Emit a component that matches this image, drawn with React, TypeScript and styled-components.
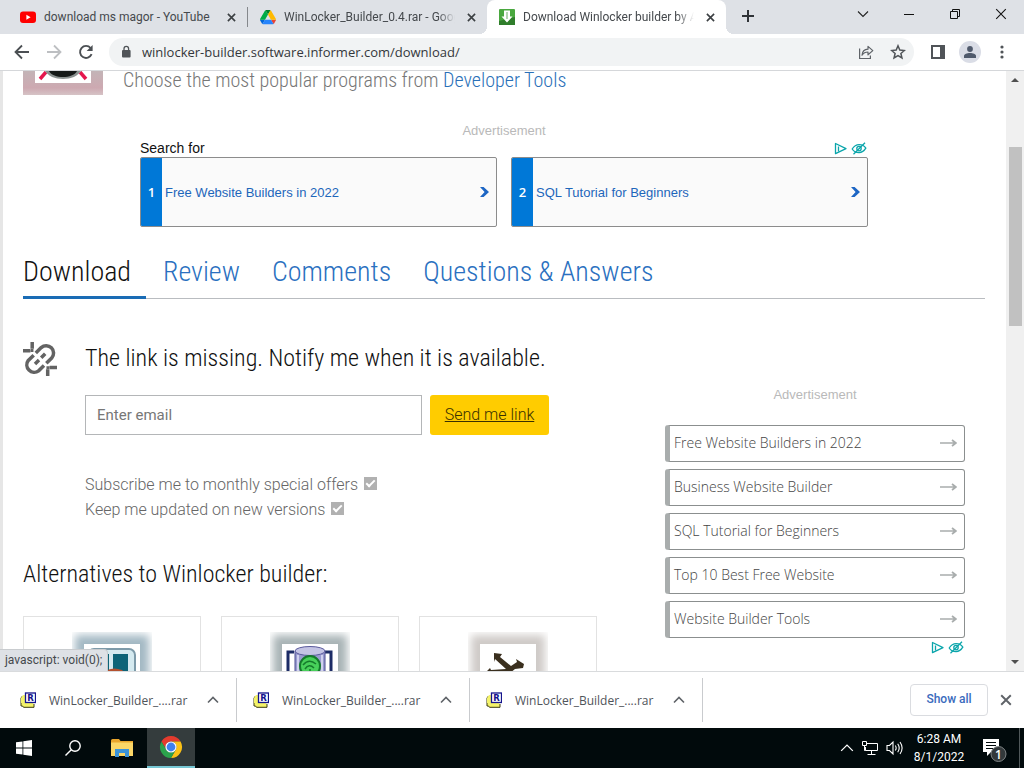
import React from "react";
import styled, { createGlobalStyle } from "styled-components";

const ui = `"Open Sans", "Noto Sans", sans-serif`;
const condensed = `"Roboto Condensed", Roboto, sans-serif`;
const arial = `"Liberation Sans", Arial, sans-serif`;

const GlobalStyle = createGlobalStyle`
  *, *::before, *::after { box-sizing: border-box; }
  body { margin: 0; background: #fff; font-family: ${ui}; overflow: hidden; }
  button { font: inherit; color: inherit; background: none; border: 0; padding: 0; }
  svg { display: block; flex: none; }
  h2, h3, p, ul { margin: 0; padding: 0; font-weight: inherit; }
  ul { list-style: none; }
`;

const Desktop = styled.div`
  display: flex;
  flex-direction: column;
  height: 100vh;
`;

/* ---------- Browser frame ---------- */

const TabStrip = styled.header`
  display: flex;
  flex: none;
  height: 34px;
  padding-left: 8px;
  background: #dee1e6;
`;

const Tab = styled.div<{ $active?: boolean }>`
  position: relative;
  display: flex;
  align-items: center;
  gap: 8px;
  flex: 0 1 239px;
  min-width: 0;
  padding: 0 8px 0 12px;
  background: ${(p) => (p.$active ? "#fff" : "transparent")};
  border-radius: 8px 8px 0 0;
  font: 12px/16px Roboto, sans-serif;
  color: #45494d;

  &::before,
  &::after {
    content: "";
    display: ${(p) => (p.$active ? "block" : "none")};
    position: absolute;
    bottom: 0;
    width: 8px;
    height: 8px;
  }
  &::before {
    left: -8px;
    background: radial-gradient(circle at 0 0, transparent 8px, #fff 8px);
  }
  &::after {
    right: -8px;
    background: radial-gradient(circle at 100% 0, transparent 8px, #fff 8px);
  }
`;

const TabDivider = styled.span`
  align-self: center;
  flex: none;
  width: 1px;
  height: 20px;
  background: #85888c;
`;

const TabTitle = styled.span<{ $fade?: boolean }>`
  flex: 1;
  min-width: 0;
  overflow: hidden;
  white-space: nowrap;
  mask-image: ${(p) => (p.$fade ? "linear-gradient(to right, #000 90%, transparent)" : "none")};
`;

const IconButton = styled.button<{ $w?: number }>`
  display: flex;
  align-items: center;
  justify-content: center;
  flex: none;
  width: ${(p) => p.$w ?? 16}px;
  height: 28px;
`;

const WindowButtons = styled.div`
  display: flex;
  margin-left: auto;
`;

const Toolbar = styled.nav`
  display: flex;
  align-items: center;
  flex: none;
  height: 37px;
  padding: 0 6px;
  border-bottom: 1px solid #d5d7da;
  background: #fff;
`;

const AddressBar = styled.div`
  display: flex;
  align-items: center;
  flex: 1;
  height: 28px;
  margin: 0 8px 0 7px;
  padding-left: 11px;
  border-radius: 14px;
  background: #f1f3f4;
`;

const Address = styled.input`
  flex: 1;
  min-width: 0;
  height: 24px;
  margin-left: 10px;
  padding: 0;
  border: 0;
  outline: 0;
  background: transparent;
  font: 13px ${ui};
  color: #34373b;
`;

const Avatar = styled.span`
  display: flex;
  align-items: center;
  justify-content: center;
  width: 22px;
  height: 22px;
  border-radius: 50%;
  background: #dadde6;
`;

const Viewport = styled.div`
  position: relative;
  display: flex;
  flex: 1;
  min-height: 0;
  overflow: hidden;
`;

const ScrollTrack = styled.div`
  display: flex;
  flex-direction: column;
  justify-content: space-between;
  align-items: center;
  flex: none;
  width: 18px;
  padding: 5px 0;
  background: #f0f0f0;
`;

const ScrollThumb = styled.div`
  width: 13px;
  height: 179px;
  margin: 63px 0 auto;
  background: #c1c1c1;
`;

const StatusBubble = styled.div`
  position: absolute;
  left: 0;
  bottom: 0;
  height: 22px;
  padding: 0 5px;
  border: 1px solid #c9cccf;
  border-width: 1px 1px 0 0;
  border-radius: 0 4px 0 0;
  background: #dee1e6;
  font: 12px/20px Roboto, sans-serif;
  color: #45494d;
`;

/* ---------- Web page ---------- */

const Page = styled.main`
  flex: 1;
  min-width: 0;
  padding: 0 21px 0 20px;
  border-left: 3px solid #e6e6e6;
  overflow: hidden;
  font-family: ${condensed};
  font-weight: 300;
`;

const Intro = styled.div`
  display: flex;
  gap: 20px;
  height: 24px;
`;

const IntroText = styled.p`
  margin-top: -5px;
  font-size: 20px;
  line-height: 28px;
  color: #777;
`;

const TextLink = styled.a`
  color: #2a70b8;
  text-decoration: none;
`;

const AdLabel = styled.p`
  font: 13px/16px ${arial};
  color: #b9b9b9;
  text-align: center;
`;

const BannerAd = styled.section`
  width: 100%;
  max-width: 728px;
  margin: 28px auto 0;
`;

const BannerHead = styled.div`
  display: flex;
  align-items: center;
  justify-content: space-between;
  height: 18px;
  font: 14px/18px ${arial};
  color: #111;
`;

const AdMarks = styled.span`
  display: flex;
  justify-content: flex-end;
  gap: 3px;
  padding-right: 1px;
`;

const BannerRow = styled.div`
  display: flex;
  gap: 14px;
`;

const BannerLink = styled.a`
  display: flex;
  align-items: center;
  flex: 1;
  height: 70px;
  border: 1px solid #8c8c8c;
  border-radius: 2px;
  background: #fafafa;
  overflow: hidden;
  font: 13px ${arial};
  color: #1d66bb;
  text-decoration: none;
`;

const BannerNumber = styled.span`
  display: flex;
  align-items: center;
  justify-content: center;
  align-self: stretch;
  width: 21px;
  margin-right: 3px;
  background: #0078d7;
  font: 600 13px ${ui};
  color: #fff;
`;

const BannerText = styled.span`
  flex: 1;
`;

const PageTabs = styled.nav`
  display: flex;
  gap: 17px;
  height: 46px;
  margin-top: 26px;
  border-bottom: 1px solid #b9bcc0;
`;

const PageTab = styled.a<{ $active?: boolean }>`
  height: 46px;
  padding-right: 15px;
  border-bottom: 3px solid ${(p) => (p.$active ? "#1a6cb5" : "transparent")};
  font-size: 28px;
  line-height: 38px;
  color: ${(p) => (p.$active ? "#111" : "#2a70c0")};
  text-decoration: none;
  white-space: nowrap;
`;

const Columns = styled.div`
  display: flex;
`;

const MainColumn = styled.div`
  flex: 1;
  min-width: 0;
`;

const Notify = styled.section`
  display: grid;
  grid-template-columns: 34px 1fr;
  column-gap: 28px;
  padding-top: 43px;
`;

const Heading = styled.h2`
  font-size: 24px;
  line-height: 32px;
  color: #111;
  white-space: nowrap;
`;

const EmailForm = styled.form`
  display: flex;
  gap: 8px;
  margin-top: 21px;
`;

const EmailInput = styled.input`
  width: 337px;
  height: 40px;
  padding: 0 11px;
  border: 1px solid #b4b6b8;
  background: #fff;
  font: 15px Roboto, sans-serif;
  &::placeholder { color: #777; }
`;

const SendLink = styled.a`
  width: 119px;
  height: 40px;
  border-radius: 3px;
  background: #fc0;
  font: 300 16px/39px Roboto, sans-serif;
  text-align: center;
  color: #3a3000;
`;

const Options = styled.div`
  display: flex;
  flex-direction: column;
  align-items: flex-start;
  margin-top: 37px;
  font: 300 16px/25px Roboto, sans-serif;
  color: #666;
`;

const Option = styled.label`
  display: flex;
  align-items: center;
  gap: 6px;
`;

const Check = styled.input`
  appearance: none;
  display: flex;
  justify-content: center;
  width: 13px;
  height: 13px;
  margin: 0 0 2px;
  background: #b1b1b1;
  &:checked::after {
    content: "";
    width: 5px;
    height: 9px;
    margin-top: 1px;
    border: solid #fff;
    border-width: 0 2px 2px 0;
    transform: rotate(45deg);
  }
`;

const AltHeading = styled(Heading)`
  margin-top: 36px;
`;

const Cards = styled.div`
  display: flex;
  gap: 20px;
  margin-top: 26px;
`;

const Card = styled.a`
  display: flex;
  justify-content: center;
  flex: none;
  width: 178px;
  height: 180px;
  padding-top: 15px;
  border: 1px solid #e2e2e2;
`;

const Side = styled.aside`
  flex: none;
  width: 340px;
  padding: 88px 20px 0;
`;

const SideList = styled.ul`
  display: flex;
  flex-direction: column;
  gap: 7px;
  margin: 22px 0 3px;
`;

const SideLink = styled.a`
  display: flex;
  align-items: center;
  justify-content: space-between;
  height: 37px;
  padding: 0 7px 2px 4px;
  border: 1px solid #8b8f8f;
  border-left: 5px solid #a9adad;
  border-radius: 3px;
  font: 300 14px ${ui};
  color: #444;
  text-decoration: none;
`;

/* ---------- Download shelf and taskbar ---------- */

const Shelf = styled.section`
  display: flex;
  align-items: center;
  flex: none;
  height: 57px;
  padding-right: 9px;
  border-top: 1px solid #d9dbdd;
  background: #fff;
`;

const ShelfItem = styled.div`
  display: flex;
  align-items: center;
  width: 233px;
  height: 44px;
  padding: 0 15px 0 16px;
  border-right: 1px solid #c9cbce;
  font-size: 12px;
  color: #50545a;
  &:first-child { width: 237px; padding-left: 20px; }
`;

const ShelfName = styled.span`
  flex: 1;
  margin-left: 13px;
  white-space: nowrap;
`;

const ShowAll = styled.button`
  width: 78px;
  height: 32px;
  margin: 0 9px 0 auto;
  padding-bottom: 2px;
  border: 1px solid #dadce0;
  border-radius: 4px;
  font: 500 12px Roboto, sans-serif;
  color: #3b6bbd;
`;

const Taskbar = styled.footer`
  display: flex;
  align-items: center;
  gap: 1px;
  flex: none;
  height: 40px;
  background: #010a0c;
  color: #fff;
`;

const TaskButton = styled.button<{ $active?: boolean }>`
  display: flex;
  align-items: center;
  justify-content: center;
  width: 48px;
  height: 40px;
  background: ${(p) => (p.$active ? "#343c3d" : "none")};
  border-bottom: ${(p) => (p.$active ? "2px solid #76c7d4" : "0")};
`;

const Tray = styled.div`
  display: flex;
  align-items: center;
  gap: 7px;
  margin-left: auto;
`;

const Clock = styled.div`
  width: 56px;
  margin: 0 9px 0 0;
  font: 12px/18px Roboto, sans-serif;
  text-align: center;
  white-space: nowrap;
`;

const Notice = styled.span`
  display: flex;
  align-items: center;
  width: 37px;
  height: 40px;
  border-right: 1px solid #50585a;
  margin-right: 4px;
`;

/* ---------- Drawings ---------- */

const CloseX = ({ size = 9, color = "#3c4043", w = 1.8 }) => (
  <svg width={size} height={size} viewBox="0 0 10 10" stroke={color} strokeWidth={w}>
    <path d="M1 1l8 8M9 1L1 9" />
  </svg>
);

const YouTubeIcon = () => (
  <svg width="16" height="16" viewBox="0 0 16 16">
    <rect y="2.5" width="16" height="11.5" rx="3" fill="#f00" />
    <path d="M6.4 5.8v4.9l4.2-2.45z" fill="#fff" />
  </svg>
);

const DriveIcon = () => (
  <svg width="16" height="16" viewBox="0 -5 87.3 87.3">
    <path d="m6.6 66.85 3.85 6.65c.8 1.4 1.95 2.5 3.3 3.3l13.75-23.8h-27.5c0 1.55.4 3.1 1.2 4.5z" fill="#0066da" />
    <path d="m43.65 25-13.75-23.8c-1.35.8-2.5 1.9-3.3 3.3l-25.4 44a9.06 9.06 0 0 0 -1.2 4.5h27.5z" fill="#00ac47" />
    <path d="m73.55 76.8c1.35-.8 2.5-1.9 3.3-3.3l1.6-2.75 7.65-13.25c.8-1.4 1.2-2.95 1.2-4.5h-27.5l5.85 11.5z" fill="#ea4335" />
    <path d="m43.65 25 13.75-23.8c-1.35-.8-2.9-1.2-4.5-1.2h-18.5c-1.6 0-3.15.45-4.5 1.2z" fill="#00832d" />
    <path d="m59.8 53h-32.3l-13.75 23.8c1.35.8 2.9 1.2 4.5 1.2h50.8c1.6 0 3.15-.45 4.5-1.2z" fill="#2684fc" />
    <path d="m73.4 26.5-12.7-22c-.8-1.4-1.95-2.5-3.3-3.3l-13.75 23.8 16.15 28h27.45c0-1.55-.4-3.1-1.2-4.5z" fill="#ffba00" />
  </svg>
);

const InformerIcon = () => (
  <svg width="16" height="16" viewBox="0 0 16 16">
    <rect width="16" height="16" rx="1" fill="#4aa83f" />
    <path d="M0 16V12l16-4v8z" fill="#2f7d2b" />
    <path d="M5 1.500h6v6h2.500L8 13.500 2.500 7.500H5z" fill="#fff" />
    <path d="M8 3v7" stroke="#9cc998" strokeWidth="1.500" />
  </svg>
);

const BackArrow = ({ color = "#4b4f53", flip = false }) => (
  <svg width="16" height="16" viewBox="0 0 16 16" fill="none" stroke={color} strokeWidth="1.8">
    <path d={flip ? "M1 8h13M8 1.5L14.5 8 8 14.5" : "M15 8H2M8 1.5L1.5 8 8 14.5"} />
  </svg>
);

const ReloadIcon = () => (
  <svg width="16" height="16" viewBox="0 0 16 16" fill="none" stroke="#4b4f53" strokeWidth="1.9">
    <path d="M13.6 10.2A6 6 0 1 1 12.6 4" />
    <path d="M14.6 1v6H8.6z" fill="#4b4f53" stroke="none" />
  </svg>
);

const LockIcon = () => (
  <svg width="12" height="14" viewBox="0 0 12 14">
    <rect x="2" y="5" width="8.6" height="7.6" rx="1" fill="#505458" />
    <path d="M4 5.5V3.7a2.3 2.3 0 0 1 4.6 0v1.8" fill="none" stroke="#505458" strokeWidth="1.3" />
  </svg>
);

const ShareIcon = () => (
  <svg width="16" height="16" viewBox="0 0 16 16" fill="none" stroke="#5f6368" strokeWidth="1.2">
    <path d="M1.6 4.5v10h10.8v-3" />
    <path d="M4 11.2c.3-3.6 2.4-5.8 6-6V2.4l4.8 4.2-4.8 4.2V8C7.4 8 5.5 8.9 4 11.2z" strokeLinejoin="round" />
  </svg>
);

const StarIcon = () => (
  <svg width="16" height="16" viewBox="0 0 16 16" fill="none" stroke="#505458" strokeWidth="1.5">
    <path d="M8 1.8l1.8 4.3 4.6.4-3.5 3 1.05 4.5L8 11.6 4.05 14l1.05-4.5-3.5-3 4.6-.4z" />
  </svg>
);

const AdChoices = () => (
  <svg width="14" height="13" viewBox="0 0 14 13" fill="none" stroke="#0aa5ab" strokeWidth="1.3">
    <path d="M1.5 1.5v10.2L12 6.6z" strokeLinejoin="round" />
    <path d="M4.500 4.500v5" />
  </svg>
);

const HideAd = () => (
  <svg width="16" height="13" viewBox="0 0 16 13" fill="none" stroke="#0aa5ab" strokeWidth="1.3">
    <path d="M1.2 7C3 4 5.5 2.6 8.2 2.6S13.5 4 14.8 6.2C13 9.2 10.5 10.6 8 10.6S2.8 9.5 1.2 7z" />
    <circle cx="8" cy="6.6" r="2.2" />
    <path d="M2.5 12.2L14 .8" />
  </svg>
);

const ChevronBlue = () => (
  <svg width="10" height="12" viewBox="0 0 10 12" fill="#1d66c4">
    <path d="M0 1h3.6l5.4 5-5.4 5H0l4.6-5z" />
  </svg>
);

const LongArrow = () => (
  <svg width="17" height="10" viewBox="0 0 17 10" fill="none" stroke="#a9adad" strokeWidth="1.7">
    <path d="M0 5h16M12 2L15.800 5 12 8" />
  </svg>
);

const BrokenLink = () => (
  <svg width="34" height="34" viewBox="0 0 34 34" fill="none" stroke="#636363" strokeWidth="3.5">
    <path d="M9.2 0V6.800M7.400 8.700H0M34 25.500H26.600M24.700 27.200V34" />
    <path d="M7.500 8.700H9.200V7M26.600 25.500H24.700V27.200" strokeWidth="2.500" />
    <path d="M12.8 11l5.4-5.400A7.400 7.400 0 0 1 28.700 16L23.300 21.300" />
    <path d="M10.700 13.200l-5.400 5.200A7.400 7.400 0 0 0 15.600 28.800L21 23.500" />
    <path d="M12 22l4-4M18.200 15.800l4-4" />
  </svg>
);

const PageLogo = () => (
  <svg width="80" height="24" viewBox="0 0 80 24">
    <defs>
      <linearGradient id="pink" x1="0" y1="0" x2="0" y2="1">
        <stop offset="0" stopColor="#c3b4b7" />
        <stop offset=".7" stopColor="#cda9b1" />
        <stop offset="1" stopColor="#d6c3c6" />
      </linearGradient>
    </defs>
    <rect width="80" height="24" fill="url(#pink)" />
    <rect x="12" width="56" height="12" fill="#fff" />
    <path d="M17 8l6-7M63 8l-6-7" stroke="#e5174d" strokeWidth="3.5" />
    <path d="M22 0h36c-3 5-10 8-18 8S25 5 22 0z" fill="#8b9291" />
    <path d="M26 0h28c-2 4-8 6-14 6S28 4 26 0z" fill="#151918" />
  </svg>
);

const Halo = ({ id, color, children }: { id: string; color: string; children: React.ReactNode }) => (
  <svg width="80" height="80" viewBox="0 0 80 80">
    <defs>
      <filter id={id} x="-0.1" y="-0.1" width="1.2" height="1.2">
        <feGaussianBlur stdDeviation="4" />
      </filter>
    </defs>
    <rect x="3" y="3" width="74" height="74" fill={color} filter={`url(#${id})`} />
    <rect x="12" y="12" width="56" height="56" fill="#fff" />
    {children}
  </svg>
);

const CardOne = () => (
  <Halo id="h1" color="#a3b8c3">
    <rect x="16" y="17" width="47" height="50" rx="6" fill="#d5eaf0" stroke="#7d9aa9" strokeWidth="2" />
    <path d="M22 22h15v40H22zM41 22h15v40H41z" fill="#0d6478" />
    <path d="M32 40q8-6 18-2l6 6H32z" fill="#b4512f" />
  </Halo>
);

const CardTwo = () => (
  <Halo id="h2" color="#a8b3b5">
    <path d="M24 20h-6v40M55 20h6v40" fill="none" stroke="#1d2c66" strokeWidth="3" />
    <path d="M25 19v45h30V19z" fill="#9a9cd0" stroke="#4b4c90" />
    <path d="M28 23v40M52 23v40" stroke="#d0d1ee" strokeWidth="2" />
    <ellipse cx="40" cy="19" rx="15" ry="4.5" fill="#c4c4e4" stroke="#5a5a9c" />
    <circle cx="40" cy="34" r="10" fill="#48d05a" stroke="#157a2b" strokeWidth="2" />
    <path d="M33 33q6-7 13-1M35 37q4-6 9-1M40 37v4" fill="none" stroke="#157a2b" strokeWidth="1.500" />
  </Halo>
);

const CardThree = () => (
  <Halo id="h3" color="#cfcac7">
    <path d="M26 21l8 1-2 3 11 9 6-4-1-3 8 5-1 4-8 1-5 4H20l-1-2 3-3 1 2 15-1-11-10-1 3z" fill="#3a2f1e" />
  </Halo>
);

const ArchiveIcon = () => (
  <svg width="16" height="16" viewBox="0 0 16 16">
    <path d="M2.5 4L1 6v8h1.5l1 1.3H14V12" fill="#f4f36a" stroke="#3a3a10" />
    <path d="M1 6l2-3h5v8H1z" fill="#f4f36a" />
    <rect x="5.5" y="1" width="10" height="9.5" fill="#fff" stroke="#14148c" strokeWidth="1.3" />
    <text x="7.3" y="9" fontFamily="DejaVu Sans" fontWeight="700" fontSize="8.5" fill="#14148c">R</text>
  </svg>
);

const CaretUp = ({ color = "#5f6368", size = 12, w = 1.6 }) => (
  <svg width={size} height={size} viewBox="0 0 12 12" fill="none" stroke={color} strokeWidth={w}>
    <path d="M1 8.5L6 3.5l5 5" />
  </svg>
);

const ChromeLogo = () => {
  const blade = "M2.47 6.5A11 11 0 0 1 21.53 6.5H12A5.5 5.5 0 0 0 7.24 14.75Z";
  return (
    <svg width="24" height="24" viewBox="0 0 24 24">
      <path d={blade} fill="#e33b2e" />
      <path d={blade} fill="#fbc116" transform="rotate(120 12 12)" />
      <path d={blade} fill="#2ba24c" transform="rotate(240 12 12)" />
      <circle cx="12" cy="12" r="5.6" fill="#fff" />
      <circle cx="12" cy="12" r="4.4" fill="#3f80ee" />
    </svg>
  );
};

/* ---------- Content ---------- */

const sideAds = [
  "Free Website Builders in 2022",
  "Business Website Builder",
  "SQL Tutorial for Beginners",
  "Top 10 Best Free Website",
  "Website Builder Tools",
];
const bannerAds = ["Free Website Builders in 2022", "SQL Tutorial for Beginners"];
const pageTabs = ["Download", "Review", "Comments", "Questions & Answers"];
const downloads = ["rar-1", "rar-2", "rar-3"];

export default function App() {
  return (
    <Desktop>
      <GlobalStyle />
      <TabStrip>
        <Tab>
          <YouTubeIcon />
          <TabTitle>download ms magor - YouTube</TabTitle>
          <IconButton aria-label="Close tab"><CloseX /></IconButton>
        </Tab>
        <TabDivider />
        <Tab>
          <DriveIcon />
          <TabTitle $fade>WinLocker_Builder_0.4.rar - Goog</TabTitle>
          <IconButton aria-label="Close tab"><CloseX /></IconButton>
        </Tab>
        <Tab $active>
          <InformerIcon />
          <TabTitle $fade>Download Winlocker builder by A</TabTitle>
          <IconButton aria-label="Close tab"><CloseX /></IconButton>
        </Tab>
        <IconButton $w={44} aria-label="New tab">
          <svg width="12" height="34" viewBox="0 0 12 34" stroke="#2f3337" strokeWidth="2"><path d="M0 19h12M6 13v12" /></svg>
        </IconButton>
        <WindowButtons>
          <IconButton $w={46} aria-label="Search tabs">
            <svg width="12" height="10" viewBox="0 0 12 10" fill="none" stroke="#222" strokeWidth="1.1"><path d="M1 2.5l5 5 5-5" /></svg>
          </IconButton>
          <IconButton $w={46} aria-label="Minimize">
            <svg width="10" height="10" viewBox="0 0 10 10" stroke="#111"><path d="M0 5.5h10" /></svg>
          </IconButton>
          <IconButton $w={46} aria-label="Restore">
            <svg width="10" height="10" viewBox="0 0 10 10" fill="none" stroke="#111"><path d="M.5 2.500h7v7h-7zM2.500 2.500v-2h7v7h-2" /></svg>
          </IconButton>
          <IconButton $w={46} aria-label="Close"><CloseX size={12} color="#111" w={0.9} /></IconButton>
        </WindowButtons>
      </TabStrip>

      <Toolbar>
        <IconButton $w={32} aria-label="Back"><BackArrow /></IconButton>
        <IconButton $w={32} aria-label="Forward"><BackArrow flip color="#bdbfc2" /></IconButton>
        <IconButton $w={32} aria-label="Reload"><ReloadIcon /></IconButton>
        <AddressBar>
          <LockIcon />
          <Address aria-label="Address" defaultValue="winlocker-builder.software.informer.com/download/" />
          <IconButton $w={32} aria-label="Share"><ShareIcon /></IconButton>
          <IconButton $w={32} aria-label="Bookmark"><StarIcon /></IconButton>
        </AddressBar>
        <IconButton $w={32} aria-label="Side panel">
          <svg width="14" height="14" viewBox="0 0 14 14" fill="none" stroke="#505458" strokeWidth="2"><path d="M1 1h12v12H1z" /><path d="M11 1v12" strokeWidth="4" /></svg>
        </IconButton>
        <IconButton $w={32} aria-label="Profile">
          <Avatar>
            <svg width="12" height="12" viewBox="0 0 12 12" fill="#505a6c"><circle cx="6" cy="3" r="2.9" /><path d="M0 12V10c0-2 3-3 6-3s6 1 6 3v2z" /></svg>
          </Avatar>
        </IconButton>
        <IconButton $w={32} aria-label="Menu">
          <svg width="4" height="14" viewBox="0 0 4 14" fill="#505458"><circle cx="2" cy="2" r="1.6" /><circle cx="2" cy="7" r="1.6" /><circle cx="2" cy="12" r="1.6" /></svg>
        </IconButton>
      </Toolbar>

      <Viewport>
        <Page>
          <Intro>
            <PageLogo />
            <IntroText>Choose the most popular programs from <TextLink href="#tools">Developer Tools</TextLink></IntroText>
          </Intro>

          <BannerAd>
            <AdLabel>Advertisement</AdLabel>
            <BannerHead>
              <span>Search for</span>
              <AdMarks><AdChoices /><HideAd /></AdMarks>
            </BannerHead>
            <BannerRow>
              {bannerAds.map((text, i) => (
                <BannerLink key={text} href="#ad">
                  <BannerNumber>{i + 1}</BannerNumber>
                  <BannerText>{text}</BannerText>
                  <IconButton as="span" $w={22}><ChevronBlue /></IconButton>
                </BannerLink>
              ))}
            </BannerRow>
          </BannerAd>

          <PageTabs>
            {pageTabs.map((name, i) => (
              <PageTab key={name} href="#tab" $active={i === 0}>{name}</PageTab>
            ))}
          </PageTabs>

          <Columns>
            <MainColumn>
              <Notify>
                <BrokenLink />
                <div>
                  <Heading>The link is missing. Notify me when it is available.</Heading>
                  <EmailForm>
                    <EmailInput type="email" placeholder="Enter email" aria-label="Enter email" />
                    <SendLink href="#send">Send me link</SendLink>
                  </EmailForm>
                  <Options>
                    <Option>Subscribe me to monthly special offers <Check type="checkbox" defaultChecked /></Option>
                    <Option>Keep me updated on new versions <Check type="checkbox" defaultChecked /></Option>
                  </Options>
                </div>
              </Notify>
              <AltHeading>Alternatives to Winlocker builder:</AltHeading>
              <Cards>
                <Card href="#one" aria-label="Alternative 1"><CardOne /></Card>
                <Card href="#two" aria-label="Alternative 2"><CardTwo /></Card>
                <Card href="#three" aria-label="Alternative 3"><CardThree /></Card>
              </Cards>
            </MainColumn>
            <Side>
              <AdLabel>Advertisement</AdLabel>
              <SideList>
                {sideAds.map((text) => (
                  <li key={text}><SideLink href="#ad">{text}<LongArrow /></SideLink></li>
                ))}
              </SideList>
              <AdMarks><AdChoices /><HideAd /></AdMarks>
            </Side>
          </Columns>
        </Page>
        <ScrollTrack>
          <svg width="8" height="8" viewBox="0 0 8 8" fill="#505050"><path d="M0 6l4-4 4 4z" /></svg>
          <ScrollThumb />
          <svg width="8" height="8" viewBox="0 0 8 8" fill="#505050"><path d="M0 2l4 4 4-4z" /></svg>
        </ScrollTrack>
        <StatusBubble>javascript: void(0);</StatusBubble>
      </Viewport>

      <Shelf>
        {downloads.map((id) => (
          <ShelfItem key={id}>
            <ArchiveIcon />
            <ShelfName>WinLocker_Builder_....rar</ShelfName>
            <IconButton aria-label="Download options"><CaretUp /></IconButton>
          </ShelfItem>
        ))}
        <ShowAll>Show all</ShowAll>
        <IconButton $w={18} aria-label="Close downloads"><CloseX size={12} color="#5f6368" w={1.6} /></IconButton>
      </Shelf>

      <Taskbar>
        <TaskButton aria-label="Start">
          <svg width="16" height="16" viewBox="0 0 16 16" fill="#fff"><path d="M0 2.3l6.5-.9v6.2H0zM7.3 1.3L16 0v7.6H7.3zM0 8.4h6.5v6.2L0 13.7zM7.3 8.4H16V16l-8.7-1.3z" /></svg>
        </TaskButton>
        <TaskButton aria-label="Search">
          <svg width="16" height="16" viewBox="0 0 16 16" fill="none" stroke="#fff" strokeWidth="1.4"><circle cx="10" cy="6" r="5.2" /><path d="M6.3 9.7L.5 15.5" /></svg>
        </TaskButton>
        <TaskButton aria-label="File Explorer">
          <svg width="22" height="18" viewBox="0 0 22 18">
            <path d="M0 1.5Q0 0 1.5 0H8l1.5 2H22v15H0z" fill="#e9a52c" />
            <path d="M0 3.5h22V17H0z" fill="#fbd667" />
            <path d="M4 10h14v8h-4v-4H8v4H4z" fill="#3c93d8" />
          </svg>
        </TaskButton>
        <TaskButton $active aria-label="Chrome"><ChromeLogo /></TaskButton>
        <Tray>
          <CaretUp color="#fff" size={14} w={1.1} />
          <svg width="18" height="16" viewBox="0 0 18 16" fill="none" stroke="#fff" strokeWidth="1">
            <path d="M5.500 3.500h11v7H4.500V7M10.500 10.500v4M6.500 14.500h8" /><path d="M1.5 1.5h4v4h-4zM3.500 6v4.500h1" />
          </svg>
          <svg width="18" height="16" viewBox="0 0 18 16" fill="none" stroke="#fff" strokeWidth="1.1">
            <path d="M1 5.5h2.5L7 2v12l-3.500-3.500H1zM9.300 5.500q1.700 2.500 0 5M11.700 3.700q3 4.300 0 8.600M14 2q4.200 6 0 12" />
          </svg>
          <Clock>6:28 AM<br />8/1/2022</Clock>
          <Notice>
            <svg width="26" height="28" viewBox="0 0 26 28">
              <path d="M0 5h16v13H8l-4 4v-4H0z" fill="#fff" />
              <path d="M3 8.500h10M3 11.500h10M3 14.500h7" stroke="#010a0c" />
              <circle cx="15.500" cy="20" r="7.500" fill="#33393b" stroke="#7f8486" />
              <text x="15.500" y="24.500" textAnchor="middle" fontFamily="Open Sans" fontWeight="600" fontSize="12" fill="#fff">1</text>
            </svg>
          </Notice>
        </Tray>
      </Taskbar>
    </Desktop>
  );
}
